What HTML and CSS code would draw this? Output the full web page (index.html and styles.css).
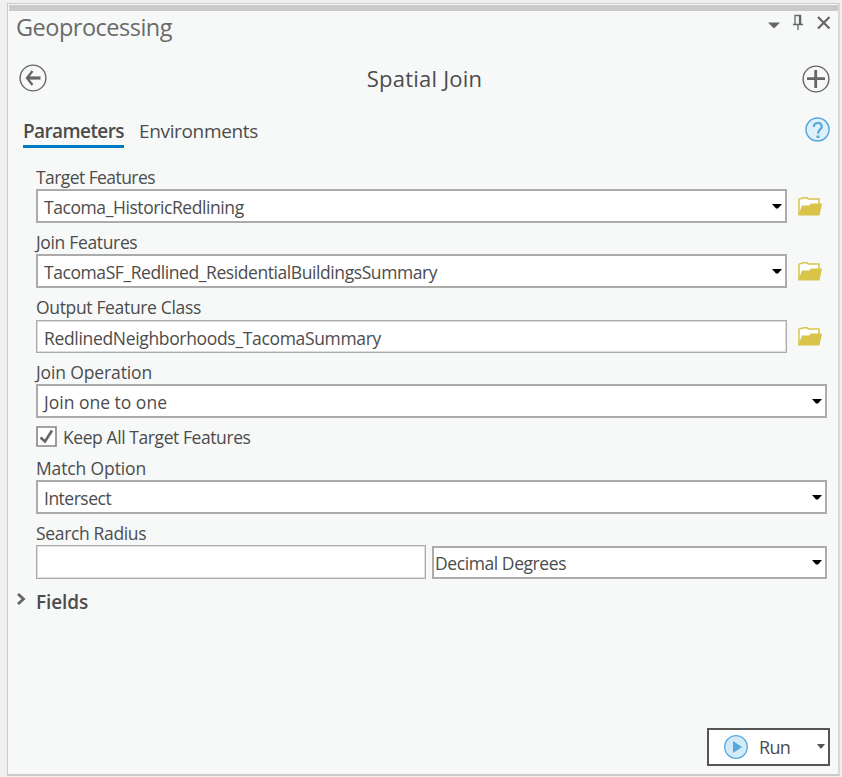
FILE: index.html
```
<!DOCTYPE html>
<html lang="en">
<head>
<meta charset="utf-8">
<title>Geoprocessing</title>
<link rel="stylesheet" href="styles.css">
</head>
<body>
<svg class="defs" width="0" height="0" aria-hidden="true">
  <symbol id="folder" viewBox="0 0 24 19"><path d="M1 18V2.5L2.5 1.5H4L5.5 .8H9L10.5 2H21V7" fill="#fff" stroke="#d9c44a" stroke-width="1.5"/><path d="M0 18.5L4 8.5H11L13 6.5H24L21.500 18.500Z" fill="#d9c44a"/></symbol>
  <symbol id="caret" viewBox="0 0 10 5"><path d="M0 0H10L6 4.500H4Z"/></symbol>
</svg>
<section class="panel">
  <header class="titlebar">
    <h1 class="title">Geoprocessing</h1>
    <svg class="window-icons" width="64" height="18" viewBox="0 0 64 18"><path d="M0 8.500H12L6.500 14H5.500Z" fill="#666"/><path d="M25 10.500H35M30 11V16M27 10V1.500H32.500V10" fill="none" stroke="#666" stroke-width="1.3"/><path d="M32 1V10" stroke="#666" stroke-width="2.300"/><path d="M50 3L61.500 14.500M61.500 3L50 14.500" stroke="#666" stroke-width="2.200"/></svg>
  </header>
  <div class="toolbar">
    <svg class="back" width="28" height="28" viewBox="0 0 28 28" fill="none" stroke="#666"><circle cx="14" cy="14" r="12.900" stroke-width="1.400"/><path d="M8.500 14H21.500" stroke-width="3.200"/><path d="M13.500 7L8 14L13.500 21" stroke-width="2.300"/></svg>
    <h2 class="tool-name">Spatial Join</h2>
    <svg width="28" height="28" viewBox="0 0 28 28" fill="none" stroke="#666"><circle cx="14" cy="14" r="12.900" stroke-width="1.400"/><path d="M5 13.700H23M13.700 5V23" stroke-width="2.800"/></svg>
  </div>
  <nav class="tabs">
    <span class="tab active"><b>Parameters</b></span>
    <span class="tab env">Environments</span>
    <svg class="help" width="26" height="26" viewBox="0 0 26 26"><circle cx="13.500" cy="12.500" r="11.500" fill="#e0f0fb" stroke="#56a9dd" stroke-width="1.500"/><path d="M9.800 10C9.800 4.600 18 4.800 17.800 9.600C17.700 12.500 14 12.500 14 16.800" fill="none" stroke="#56a9dd" stroke-width="2.200"/><path d="M12.500 18.500H15.500V21H12.500Z" fill="#56a9dd"/></svg>
  </nav>
  <main class="form">
    <div class="field"><label class="target-label">Target Features</label><div class="row"><div class="combo"><span>Tacoma_HistoricRedlining</span><svg class="caret"><use href="#caret"/></svg></div><svg class="folder"><use href="#folder"/></svg></div></div>
    <div class="field"><label>Join Features</label><div class="row"><div class="combo"><span>TacomaSF_Redlined_ResidentialBuildingsSummary</span><svg class="caret"><use href="#caret"/></svg></div><svg class="folder"><use href="#folder"/></svg></div></div>
    <div class="field"><label>Output Feature Class</label><div class="row"><div class="combo text"><span class="output-value">RedlinedNeighborhoods_TacomaSummary</span></div><svg class="folder"><use href="#folder"/></svg></div></div>
    <div class="field last"><label class="option-label">Join Operation</label><div class="row"><div class="combo"><span class="operation-value">Join one to one</span><svg class="caret"><use href="#caret"/></svg></div></div></div>
    <div class="check-row"><svg width="21" height="21" viewBox="0 0 21 21"><path d="M1 1H20V20H1Z" fill="#fff" stroke="#858585" stroke-width="1.600"/><path d="M4.500 11.500L9 15.500L16 4.500" fill="none" stroke="#666" stroke-width="2.600"/></svg><span>Keep All Target Features</span></div>
    <div class="field"><label class="option-label">Match Option</label><div class="row"><div class="combo"><span class="match-value">Intersect</span><svg class="caret"><use href="#caret"/></svg></div></div></div>
    <div class="field last"><label>Search Radius</label><div class="row"><div class="combo text radius"></div><div class="combo unit"><span>Decimal Degrees</span><svg class="caret"><use href="#caret"/></svg></div></div></div>
  </main>
  <div class="group"><svg class="chevron" width="9" height="12" viewBox="0 0 9 12"><path d="M1 1L6.500 6L1 11" fill="none" stroke="#666" stroke-width="2.800"/></svg><b>Fields</b></div>
  <footer class="actions"><div class="run"><svg width="24" height="24" viewBox="0 0 24 24"><circle cx="12" cy="12" r="11.300" fill="#d3eaf8" stroke="#56a9dd" stroke-width="1.300"/><path d="M9 6L18 12L9 18Z" fill="#56a9dd"/></svg><span class="run-label">Run</span><svg class="run-caret" width="8" height="5" viewBox="0 0 8 5"><path d="M0 0H8L4.500 4.500H3.500Z" fill="#555"/></svg></div></footer>
</section>
</body>
</html>
```
FILE: styles.css
```
* { box-sizing: border-box; }
body { margin: 0; height: 777px; overflow: hidden; padding: 3px 2px 1px 7px; background: #f0f0f0; color: #4c4c4c; font: 17.5px/22px "Open Sans", "Noto Sans", sans-serif; }
.defs { position: absolute; }
svg { display: block; flex: none; }
h1, h2 { margin: 0; font-weight: 400; }
span, b, h1, h2 { white-space: nowrap; }
b { font-weight: 600; }
.panel { height: 773px; display: flex; flex-direction: column; border: 1px solid #cbcbcb; border-right: 2px solid #d8d8d8; border-bottom-width: 2px; background: #f7f9f8; }
.panel > * { flex: none; }
.titlebar { height: 43px; border-top: 6px solid #cacaca; margin: 1px 0 0 1px; display: flex; justify-content: space-between; padding: 2px 6px 0 7px; }
.title { font-size: 23.5px; line-height: 28px; letter-spacing: -0.5px; color: #6a6a6a; }
.window-icons { margin-top: 1px; }
.toolbar { height: 62px; display: flex; justify-content: space-between; align-items: center; padding: 0 8px 0 11px; }
.back { margin-top: -2px; }
.tool-name { font-size: 22px; line-height: 30px; letter-spacing: 0.22px; margin-top: -2px; }
.tabs { height: 57px; display: flex; align-items: flex-start; padding: 10px 8px 0 15px; }
.tab { font-size: 19px; line-height: 23px; height: 28px; }
.active { width: 101px; border-bottom: 3px solid #007ac2; margin-right: 15px; letter-spacing: -0.6px; }
.env { letter-spacing: -0.35px; }
.help { margin: -3px 0 0 auto; }
.form { padding: 0 11px 0 28px; letter-spacing: -0.42px; }
.field { margin-bottom: 9px; }
.field.last { margin-bottom: 0; }
label { display: block; height: 22px; line-height: 20px; letter-spacing: -0.34px; }
.target-label { letter-spacing: -0.57px; }
.option-label { letter-spacing: -0.13px; }
.row { display: flex; align-items: flex-end; height: 34px; }
.combo { flex: 1; height: 34px; display: flex; align-items: center; justify-content: space-between; background: #fff; border: 2px solid #ababab; padding: 1px 3px 0 6px; }
.text { height: 33px; border: 1px solid #ababab; box-shadow: inset 0 0 0 1px #dedede; padding: 2px 5px 0 7px; }
.output-value { letter-spacing: -0.33px; }
.operation-value { letter-spacing: 0; }
.match-value { letter-spacing: -0.5px; }
.caret { width: 10px; height: 5px; margin-top: -1px; fill: #000; }
.folder { width: 24px; height: 19px; margin: 0 5px 7px 11px; }
.radius { flex: 0 0 390px; height: 34px; }
.unit { margin-left: 6px; height: 33px; padding-left: 1px; }
.check-row { height: 40px; display: flex; align-items: flex-start; gap: 6px; padding-top: 8px; }
.group { display: flex; align-items: center; height: 46px; padding: 0 0 0 9px; gap: 10px; font-size: 19px; letter-spacing: -0.1px; }
.chevron { margin-top: -6px; }
.actions { margin-top: auto; display: flex; justify-content: flex-end; padding: 0 8px 8px; }
.run { width: 123px; height: 38px; background: #fff; border: 2px solid #555; display: flex; align-items: center; padding: 0 3px 0 15px; }
.run-label { margin: 0 0 0 11px; font-size: 18px; letter-spacing: -0.7px; }
.run-caret { margin-left: auto; margin-top: -2px; }
```
